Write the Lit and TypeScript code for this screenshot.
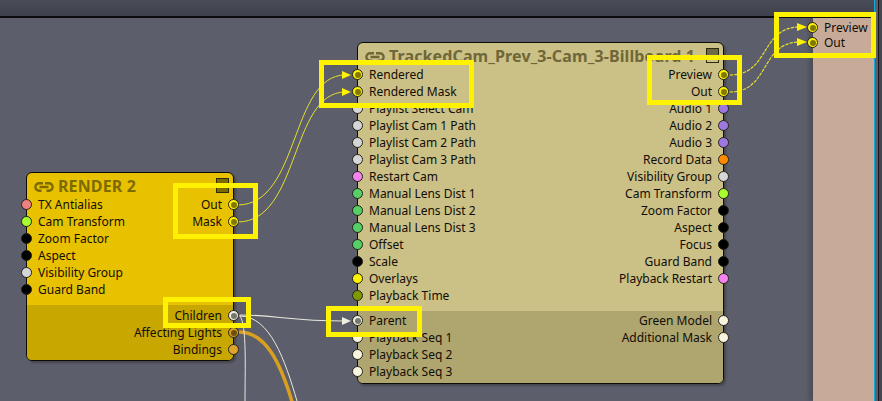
import { LitElement, html, css, svg } from "lit";
import { customElement } from "lit/decorators.js";

type Port = { label: string; color: string; wired?: boolean };
type Side = { in: Port[]; out: Port[] };

const BLACK = "#000000";
const GREY = "#d6d6d6";
const CREAM = "#f7f5e0";
const GREEN = "#55cf66";
const PURPLE = "#9d78e0";
const YEL = "#fff200";

const p = (label: string, color: string, wired = false): Port => ({ label, color, wired });

const renderTop: Side = {
  in: [
    p("TX Antialias", "#f08080"),
    p("Cam Transform", "#a8ff2e"),
    p("Zoom Factor", BLACK),
    p("Aspect", BLACK),
    p("Visibility Group", GREY),
    p("Guard Band", BLACK),
  ],
  out: [p("Out", YEL, true), p("Mask", YEL, true)],
};
const renderBottom: Side = {
  in: [],
  out: [p("Children", "#efefe0", true), p("Affecting Lights", "#d9a020", true), p("Bindings", "#dda42a")],
};
const camTop: Side = {
  in: [
    p("Rendered", YEL, true),
    p("Rendered Mask", YEL, true),
    p("Playlist Select Cam", GREY),
    p("Playlist Cam 1 Path", GREY),
    p("Playlist Cam 2 Path", GREY),
    p("Playlist Cam 3 Path", GREY),
    p("Restart Cam", "#f582ee"),
    p("Manual Lens Dist 1", GREEN),
    p("Manual Lens Dist 2", GREEN),
    p("Manual Lens Dist 3", GREEN),
    p("Offset", GREEN),
    p("Scale", BLACK),
    p("Overlays", "#fff200"),
    p("Playback Time", "#7f9a00"),
  ],
  out: [
    p("Preview", YEL, true),
    p("Out", YEL, true),
    p("Audio 1", PURPLE),
    p("Audio 2", PURPLE),
    p("Audio 3", PURPLE),
    p("Record Data", "#ff8a00"),
    p("Visibility Group", GREY),
    p("Cam Transform", "#a8ff2e"),
    p("Zoom Factor", BLACK),
    p("Aspect", BLACK),
    p("Focus", BLACK),
    p("Guard Band", BLACK),
    p("Playback Restart", "#f582ee"),
  ],
};
const camBottom: Side = {
  in: [p("Parent", "#efefe0", true), p("Playback Seq 1", CREAM), p("Playback Seq 2", CREAM), p("Playback Seq 3", CREAM)],
  out: [p("Green Model", CREAM), p("Additional Mask", CREAM)],
};

const linkIcon = svg`<svg class="link" viewBox="0 0 20 10" width="20" height="10" aria-hidden="true">
  <path d="M9 1.2H5.2a3.8 3.8 0 0 0 0 7.6H7.5M11 1.2h3.8a3.8 3.8 0 0 1 0 7.6H12.5M5.5 5H14.5" fill="none" stroke="currentColor" stroke-width="2.4"/>
</svg>`;

@customElement("app-root")
export class AppRoot extends LitElement {
  static styles = css`
    :host {
      display: block;
      width: 882px;
      height: 401px;
      font-family: "Noto Sans", sans-serif;
    }
    .screen {
      position: relative;
      width: 882px;
      height: 401px;
      overflow: hidden;
      background: #5c5e6b;
      display: grid;
      grid-template-columns: 813px 61px 1px 3px 1px 3px;
      grid-template-rows: 18px 1fr;
    }
    .topbar {
      grid-column: 1 / 3;
      grid-row: 1;
      background: linear-gradient(#4a4d57, #3e414b);
      border-bottom: 2px solid #0c0c0e;
    }
    .canvas {
      grid-column: 1;
      grid-row: 2;
    }
    .panel {
      grid-column: 2;
      grid-row: 2;
      background: #c8aa99;
      box-shadow: -4px 0 4px rgba(0, 0, 0, 0.18);
    }
    .blue {
      grid-column: 3;
      grid-row: 1 / 3;
      background: #17a5dc;
    }
    .gap {
      grid-column: 4;
      grid-row: 1 / 3;
      background: #5c5e6b;
    }
    .rail {
      grid-column: 5;
      grid-row: 1 / 3;
      background: #15151a;
    }
    .edge {
      grid-column: 6;
      grid-row: 1 / 3;
      background: #45474f;
    }
    .node {
      position: absolute;
      box-sizing: border-box;
      border: 1px solid #0b0b08;
      border-radius: 6px;
      display: flex;
      flex-direction: column;
      box-shadow: 2px 2px 2px rgba(0, 0, 0, 0.25);
      color: #120d07;
    }
    .render {
      left: 26px;
      top: 172px;
      width: 208px;
      height: 189px;
      background: #e8c200;
      --low: #c7a700;
      --title: #7d6a00;
      --btn: #7d6a00;
      --btn2: #7d6a00;
    }
    .cam {
      left: 357px;
      top: 42px;
      width: 367px;
      height: 342px;
      background: #cbc085;
      --low: #aea56f;
      --title: #6f6738;
      --btn: #6f6a45;
      --btn2: transparent;
    }
    .head {
      height: 22px;
      display: flex;
      align-items: center;
      gap: 4px;
      padding: 5px 4px 0 7px;
      box-sizing: border-box;
      color: var(--title);
      font-weight: 700;
      font-size: 16px;
      line-height: 17px;
      letter-spacing: 0.12px;
      white-space: nowrap;
      flex: none;
    }
    .link { flex: none; }
    .btn {
      margin-left: auto;
      width: 13px;
      height: 15px;
      box-sizing: border-box;
      border: 1px solid #2e2a10;
      background: linear-gradient(var(--btn) 0 50%, var(--btn2) 50%);
      flex: none;
      align-self: flex-start;
    }
    .section {
      flex: none;
      display: flex;
      justify-content: space-between;
    }
    .section.low {
      flex: 1;
      background: var(--low);
      border-radius: 0 0 5px 5px;
    }
    .spacer7 { flex: none; height: 7px; }
    .col {
      display: flex;
      flex-direction: column;
    }
    .row {
      height: 17px;
      display: flex;
      align-items: center;
      gap: 6px;
      font-size: 12px;
      line-height: 14px;
      white-space: nowrap;
    }
    .left .row { margin-left: -6px; }
    .right .row { margin-right: -6px; justify-content: flex-end; }
    .dot {
      width: 11px;
      height: 11px;
      border-radius: 50%;
      border: 1px solid #23231a;
      box-sizing: border-box;
      flex: none;
      position: relative;
    }
    .dot.wired::after {
      content: "";
      position: absolute;
      inset: 1.5px;
      border-radius: 50%;
      background: rgba(0, 0, 0, 0.5);
    }
    .wires {
      position: absolute;
      left: 0;
      top: 0;
      pointer-events: none;
    }
    .box {
      position: absolute;
      box-sizing: border-box;
      border: 5px solid #fff200;
    }
    .ext {
      position: absolute;
      left: 807px;
      top: 20px;
      display: flex;
      flex-direction: column;
      color: #120d07;
    }
    .ext .row { height: 15px; }
  `;

  private row(port: Port, right: boolean) {
    const dot = html`<span class="dot ${port.wired ? "wired" : ""}" style="background:${port.color}"></span>`;
    return right
      ? html`<div class="row"><span>${port.label}</span>${dot}</div>`
      : html`<div class="row">${dot}<span>${port.label}</span></div>`;
  }

  private section(side: Side, low: boolean, top: number) {
    return html`<div class="section ${low ? "low" : ""}" style="padding-top:${top}px">
      <div class="col left">${side.in.map((x) => this.row(x, false))}</div>
      <div class="col right">${side.out.map((x) => this.row(x, true))}</div>
    </div>`;
  }

  render() {
    return html`<div class="screen">
      <div class="topbar"></div>
      <div class="canvas"></div>
      <div class="panel"></div>
      <div class="blue"></div>
      <div class="gap"></div>
      <div class="rail"></div>
      <div class="edge"></div>

      <svg class="wires" width="882" height="401" viewBox="0 0 882 401">
        <g fill="none" stroke-linecap="round">
          <path d="M240 332 C 265 333 280 360 293 405" stroke="#d9a020" stroke-width="3.5"/>
          <path d="M240 315 C 275 315 290 321 345 321" stroke="#e8e8dc" stroke-width="1.2"/>
          <path d="M240 316 C 270 316 285 360 297 401" stroke="#e8e8dc" stroke-width="1"/>
          <path d="M240 316 C 247 325 245 370 245 401" stroke="#e8e8dc" stroke-width="1"/>
          <path d="M238 205 C 300 205 290 75 345 75" stroke="#e6e02a" stroke-width="1"/>
          <path d="M238 222 C 300 222 290 92 345 92" stroke="#e6e02a" stroke-width="1"/>
          <path d="M730 75 C 770 75 760 27 800 27" stroke="#e6e02a" stroke-width="1.2" stroke-dasharray="2.5 2"/>
          <path d="M730 92 C 770 92 760 42 800 42" stroke="#e6e02a" stroke-width="1.2" stroke-dasharray="2.5 2"/>
        </g>
        <path d="M342 71 L351 75 L342 79Z M342 88 L351 92 L342 96Z M797 23 L807 27 L797 31Z M797 38 L807 42 L797 46Z" fill="#fff200"/>
        <path d="M342 317 L351 321 L342 325Z" fill="#efefe0"/>
      </svg>

      <div class="node render">
        <div class="head">${linkIcon}<span>RENDER 2</span><span class="btn"></span></div>
        ${this.section(renderTop, false, 1)}
        <div class="spacer7"></div>
        ${this.section(renderBottom, true, 2)}
      </div>

      <div class="node cam">
        <div class="head">${linkIcon}<span>TrackedCam_Prev_3-Cam_3-Billboard 1</span><span class="btn"></span></div>
        ${this.section(camTop, false, 1)}
        <div class="spacer7"></div>
        ${this.section(camBottom, true, 1)}
      </div>

      <div class="ext">
        <div class="row"><span class="dot wired" style="background:#fff200"></span><span>Preview</span></div>
        <div class="row"><span class="dot wired" style="background:#fff200"></span><span>Out</span></div>
      </div>

      <div class="box" style="left:173px;top:183px;width:85px;height:56px"></div>
      <div class="box" style="left:163px;top:297px;width:88px;height:31px"></div>
      <div class="box" style="left:319px;top:60px;width:155px;height:48px"></div>
      <div class="box" style="left:326px;top:306px;width:96px;height:31px"></div>
      <div class="box" style="left:647px;top:55px;width:95px;height:50px"></div>
      <div class="box" style="left:774px;top:12px;width:102px;height:46px"></div>
    </div>`;
  }
}
